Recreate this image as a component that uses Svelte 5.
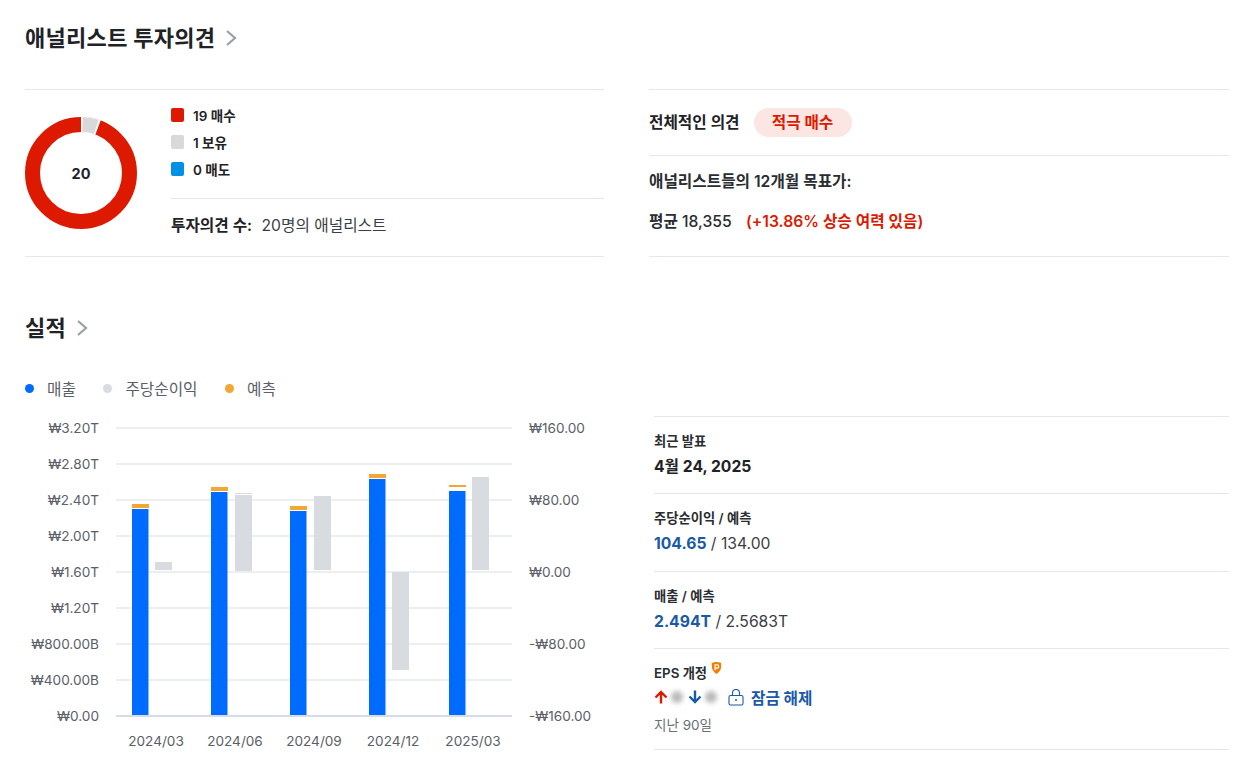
<script lang="ts">
	const legend = [
		{ label: '19 매수', color: '#dd1a00' },
		{ label: '1 보유', color: '#d9d9d9' },
		{ label: '0 매도', color: '#0091e6' }
	];

	const leftAxis = ['₩3.20T', '₩2.80T', '₩2.40T', '₩2.00T', '₩1.60T', '₩1.20T', '₩800.00B', '₩400.00B', '₩0.00'];
	const rightAxis = ['₩160.00', '₩80.00', '₩0.00', '-₩80.00', '-₩160.00'];

	const bars = [
		{ label: '2024/03', x: 132, top: 509, capTop: 504, capH: 4, gx: 155, gTop: 562, gBottom: 570 },
		{ label: '2024/06', x: 211, top: 492, capTop: 487, capH: 4, gx: 235, gTop: 495, gBottom: 571 },
		{ label: '2024/09', x: 290, top: 511, capTop: 506, capH: 4, gx: 314, gTop: 496, gBottom: 570 },
		{ label: '2024/12', x: 369, top: 479, capTop: 474, capH: 4, gx: 392, gTop: 572, gBottom: 670 },
		{ label: '2025/03', x: 449, top: 491, capTop: 485, capH: 2, gx: 472, gTop: 477, gBottom: 570 }
	];

	const gridY = [428, 464, 500, 536, 572, 608, 644, 680];
	const circ = 2 * Math.PI * 48.5;
</script>

<div class="page">
	<h2 class="title">애널리스트 투자의견 <svg class="chev" viewBox="0 0 12 18"><path d="M2 2l8 7-8 7" /></svg></h2>

	<div class="columns">
		<div class="opinion">
			<div class="donut">
				<svg width="112" height="114" viewBox="0 0 112 114">
					<g transform="rotate(-90 56 57)">
						<circle cx="56" cy="57" r="48.5" fill="none" stroke="#dd1a00" stroke-width="15" />
						<circle cx="56" cy="57" r="48.5" fill="none" stroke="#fff" stroke-width="16"
							stroke-dasharray="{circ * 0.06} {circ}" stroke-dashoffset="{circ * 0.003}" />
						<circle cx="56" cy="57" r="48.5" fill="none" stroke="#d9d9d9" stroke-width="15"
							stroke-dasharray="{circ * 0.046} {circ}" stroke-dashoffset="{-circ * 0.005}" />
					</g>
				</svg>
				<span class="count">20</span>
			</div>
			<div class="breakdown">
				<ul>
					{#each legend as item}
						<li><i style="background:{item.color}"></i>{item.label}</li>
					{/each}
				</ul>
				<p class="total"><b>투자의견 수:</b> <span>20명의 애널리스트</span></p>
			</div>
		</div>

		<div class="summary">
			<div class="overall">
				<b>전체적인 의견</b>
				<span class="pill">적극 매수</span>
			</div>
			<div class="target">
				<p class="target-head">애널리스트들의 12개월 목표가:</p>
				<p class="target-avg"><b>평균</b> 18,355 <em>(+13.86% 상승 여력 있음)</em></p>
			</div>
		</div>
	</div>

	<h2 class="title second">실적 <svg class="chev" viewBox="0 0 12 18"><path d="M2 2l8 7-8 7" /></svg></h2>

	<div class="earnings">
		<div class="chart">
			<div class="keys">
				<span><i style="background:#006bff"></i>매출</span>
				<span><i style="background:#d8dbdf"></i>주당순이익</span>
				<span><i style="background:#f2a735"></i>예측</span>
			</div>
			<svg class="plot" width="600" height="356" viewBox="0 404 600 356">
				{#each gridY as y}
					<line x1="116" x2="512" y1={y} y2={y} stroke="#eceef1" stroke-width="2" />
				{/each}
				<line x1="116" x2="512" y1="716" y2="716" stroke="#d5dbe8" stroke-width="2" />

				{#each leftAxis as label, i}
					<text x="99" y={433 + i * 36} text-anchor="end">{label}</text>
				{/each}
				{#each rightAxis as label, i}
					<text x="529" y={433 + i * 72}>{label}</text>
				{/each}

				{#each bars as bar}
					<rect x={bar.x} y={bar.capTop} width="17" height={bar.capH} fill="#f2a735" />
					<rect x={bar.x} y={bar.top} width="16.5" height={715 - bar.top} fill="#006bff" />
					<rect x={bar.gx} y={bar.gTop} width="17" height={bar.gBottom - bar.gTop} fill="#d8dbdf" />
					<text x={bar.x + 24} y="746" text-anchor="middle">{bar.label}</text>
				{/each}
				<rect x="235" y="493" width="17" height="1" fill="#d8dbdf" />
			</svg>
		</div>

		<div class="details">
			<div class="row">
				<div class="label">최근 발표</div>
				<div class="value date">4월 24, 2025</div>
			</div>
			<div class="row">
				<div class="label">주당순이익 / 예측</div>
				<div class="value"><b>104.65</b> / 134.00</div>
			</div>
			<div class="row">
				<div class="label">매출 / 예측</div>
				<div class="value"><b>2.494T</b> / 2.5683T</div>
			</div>
			<div class="row eps">
				<div class="label eps-label">EPS 개정
					<svg class="pro" width="11" height="12" viewBox="0 0 11 13">
						<path d="M.5 1.2C2 .4 3.700 0 5.500 0s3.500.4 5 1.200v4.300c0 3-2 5.600-5 7.500-3-1.900-5-4.500-5-7.500z" fill="#f57c00" />
						<path d="M4 9V3.200h2.200a1.700 1.700 0 0 1 0 3.500H4" fill="none" stroke="#fff" stroke-width="1.300" />
					</svg>
				</div>
				<div class="revisions">
					<svg width="14" height="14" viewBox="0 0 14 14"><path d="M7 13.500V2M1.500 7.500L7 2l5.500 5.500" fill="none" stroke="#dd1a00" stroke-width="2.400" /></svg>
					<span class="blur"></span>
					<svg class="down" width="14" height="14" viewBox="0 0 14 14"><path d="M7 .5V12M1.500 6.500L7 12l5.500-5.500" fill="none" stroke="#1a5aa6" stroke-width="2.400" /></svg>
					<span class="blur"></span>
					<svg class="lock" width="16" height="17" viewBox="0 0 16 17">
						<rect x="1" y="6.500" width="14" height="9.500" rx="1.500" fill="none" stroke="#1a5aa6" stroke-width="1.100" />
						<path d="M4.500 6.500V4a3.500 3.500 0 0 1 7 0v2.500" fill="none" stroke="#1a5aa6" stroke-width="1.100" />
						<circle cx="8" cy="11" r="1" fill="#1a5aa6" />
					</svg>
					<b>잠금 해제</b>
				</div>
				<div class="period">지난 90일</div>
			</div>
		</div>
	</div>
</div>

<style>
	:global(body) {
		margin: 0;
		background: #fff;
		font-family: Inter, "Noto Sans CJK KR", "Liberation Sans", sans-serif;
		color: #1f2226;
	}

	.page {
		width: 1246px;
		height: 781px;
		box-sizing: border-box;
		padding: 21px 17px 0 25px;
		overflow: hidden;
	}

	.title {
		display: flex;
		align-items: center;
		gap: 10px;
		margin: 0;
		height: 30px;
		font-size: 22px;
		font-weight: 700;
		letter-spacing: 0.3px;
		color: #1f2226;
	}

	.chev {
		width: 12px;
		height: 18px;
		margin-top: 4px;
		fill: none;
		stroke: #9a9ea8;
		stroke-width: 2.200;
	}

	.columns {
		display: grid;
		grid-template-columns: 579px 580px;
		gap: 45px;
		margin-top: 38px;
	}

	.opinion {
		display: flex;
		height: 168px;
		box-sizing: border-box;
		border-top: 1px solid #e3e8f0;
		border-bottom: 1px solid #e3e8f0;
	}

	.donut {
		position: relative;
		width: 112px;
		height: 114px;
		margin: 26px 34px 0 0;
		flex: none;
	}

	.donut svg {
		display: block;
	}

	.count {
		position: absolute;
		inset: 0;
		display: flex;
		align-items: center;
		justify-content: center;
		font-size: 14.500px;
		font-weight: 700;
	}

	.breakdown {
		flex: 1;
	}

	ul {
		list-style: none;
		margin: 0;
		padding: 15px 0 0;
		height: 109px;
		box-sizing: border-box;
		border-bottom: 1px solid #e3e8f0;
		display: flex;
		flex-direction: column;
		gap: 7px;
	}

	li {
		display: flex;
		align-items: center;
		height: 20px;
		font-size: 13.500px;
		font-weight: 600;
	}

	li i {
		width: 13px;
		height: 14px;
		border-radius: 2px;
		margin-right: 9px;
	}

	.total {
		margin: 17px 0 0;
		font-size: 15.700px;
		line-height: 20px;
		white-space: pre-wrap;
	}

	.total b {
		font-weight: 600;
		margin-right: 5px;
	}

	.total span {
		color: #3a3e44;
	}

	.summary {
		height: 168px;
		box-sizing: border-box;
		border-top: 1px solid #e3e8f0;
		border-bottom: 1px solid #e3e8f0;
	}

	.overall {
		display: flex;
		align-items: center;
		height: 65px;
		border-bottom: 1px solid #e3e8f0;
		font-size: 15.700px;
	}

	.overall b {
		font-weight: 600;
		margin-right: 14px;
		margin-top: -2px;
	}

	.pill {
		width: 98px;
		height: 29px;
		border-radius: 15px;
		background: #fbe6e4;
		color: #dd1a00;
		font-weight: 700;
		display: flex;
		align-items: center;
		justify-content: center;
		padding-bottom: 2px;
		box-sizing: border-box;
	}

	.target p {
		margin: 0;
		font-size: 15.700px;
		line-height: 20px;
		color: #2a2d31;
	}

	.target-head {
		padding-top: 16px;
		font-weight: 600;
	}

	.target-avg {
		padding-top: 20px;
		font-weight: 500;
		white-space: pre-wrap;
	}

	.target-avg b {
		font-weight: 600;
	}

	.target-avg em {
		font-style: normal;
		font-weight: 600;
		color: #dd1a00;
		margin-left: 10px;
	}

	.second {
		margin-top: 54px;
	}

	.earnings {
		display: flex;
	}

	.chart {
		width: 629px;
		flex: none;
		margin-top: 24px;
	}

	.keys {
		display: flex;
		gap: 27.500px;
		height: 30px;
		align-items: center;
		margin-top: 8px;
		font-size: 15.700px;
		color: #5b6068;
	}

	.keys span {
		display: flex;
		align-items: center;
	}

	.keys i {
		width: 9px;
		height: 9px;
		border-radius: 50%;
		margin-right: 13px;
	}

	.plot {
		display: block;
		margin: 1px 0 0 -25px;
	}

	.plot text {
		font-size: 13.600px;
		fill: #5b6068;
		font-family: Inter, "Noto Sans CJK KR", sans-serif;
	}

	.details {
		flex: 1;
		margin-top: 75px;
		border-top: 1px solid #e3e8f0;
	}

	.row {
		height: 77.400px;
		box-sizing: border-box;
		padding-top: 16px;
		border-bottom: 1px solid #e3e8f0;
	}

	.label {
		height: 16px;
		font-size: 13.300px;
		line-height: 16px;
		font-weight: 600;
		color: #2a2d31;
	}

	.value {
		margin-top: 8px;
		font-size: 15.700px;
		line-height: 20px;
		color: #3a3e44;
	}

	.value b {
		font-weight: 700;
		color: #1a5aa6;
	}

	.date {
		font-weight: 700;
		color: #1f2226;
	}

	.eps {
		height: 101px;
	}

	.eps-label {
		display: flex;
		gap: 4px;
	}

	.pro {
		margin-top: -3px;
	}

	.revisions {
		display: flex;
		align-items: center;
		height: 20px;
		margin-top: 6px;
		font-size: 15.700px;
	}

	.revisions b {
		color: #1a5aa6;
		font-weight: 700;
		margin-left: 7px;
	}

	.blur {
		width: 12px;
		height: 12px;
		margin: 0 0 0 3px;
		border-radius: 50%;
		background: #b8b8b8;
		filter: blur(2.500px);
	}

	.down {
		margin-left: 5px;
	}

	.lock {
		margin-left: 11px;
	}

	.period {
		margin-top: 9px;
		font-size: 13.500px;
		line-height: 18px;
		color: #6a6f76;
	}
</style>
